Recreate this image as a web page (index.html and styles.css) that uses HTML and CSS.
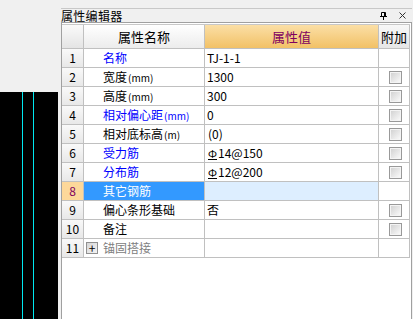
FILE: index.html
```html
<!DOCTYPE html>
<html>
<head>
<meta charset="utf-8">
<link rel="stylesheet" href="styles.css">
</head>
<body>
<div class="left">
  <div class="left-top"></div>
  <div class="canvas"><i class="cy cy1"></i><i class="cy cy2"></i></div>
</div>
<div class="panel">
  <div class="titlebar">
    <span class="title">属性编辑器</span>
    <span class="tools">
      <svg class="pin" width="7" height="8" viewBox="0 0 7 8"><path d="M1.5 0.5H5.5V4.5M1.5 0.5V4.5M4.5 0.5V4.5M0 4.5H7M3.5 4.5V8" stroke="#000" stroke-width="1" fill="none"/></svg>
      <svg class="close" width="7" height="7" viewBox="0 0 7 7"><path d="M0.5 0.5L6.5 6.5M6.5 0.5L0.5 6.5" stroke="#333" stroke-width="1" fill="none"/></svg>
    </span>
  </div>
  <div class="body">
    <div class="grid">
      <div class="c num hd"></div>
      <div class="c hd name-h">属性名称</div>
      <div class="c hd val-h">属性值</div>
      <div class="c hd add-h">附加</div>

      <div class="c num">1</div><div class="c nm blue">名称</div><div class="c val">TJ-1-1</div><div class="c add"></div>
      <div class="c num">2</div><div class="c nm">宽度<span class="u">(mm)</span></div><div class="c val">1300</div><div class="c add"><span class="cb"></span></div>
      <div class="c num">3</div><div class="c nm">高度<span class="u">(mm)</span></div><div class="c val">300</div><div class="c add"><span class="cb"></span></div>
      <div class="c num">4</div><div class="c nm blue">相对偏心距<span class="u">(mm)</span></div><div class="c val">0</div><div class="c add"><span class="cb"></span></div>
      <div class="c num">5</div><div class="c nm">相对底标高<span class="u">(m)</span></div><div class="c val ind">(0)</div><div class="c add"><span class="cb"></span></div>
      <div class="c num">6</div><div class="c nm blue">受力筋</div><div class="c val ind"><span class="bar">Ф</span>14@150</div><div class="c add"><span class="cb"></span></div>
      <div class="c num">7</div><div class="c nm blue">分布筋</div><div class="c val ind"><span class="bar">Ф</span>12@200</div><div class="c add"><span class="cb"></span></div>
      <div class="c num sel">8</div><div class="c nm selname">其它钢筋</div><div class="c val selval"></div><div class="c add"></div>
      <div class="c num">9</div><div class="c nm">偏心条形基础</div><div class="c val">否</div><div class="c add"><span class="cb"></span></div>
      <div class="c num">10</div><div class="c nm">备注</div><div class="c val"></div><div class="c add"><span class="cb"></span></div>
      <div class="c num">11</div><div class="c nm grp"><span class="plus">+</span>锚固搭接</div><div class="c val"></div><div class="c add"></div>
    </div>
  </div>
</div>
</body>
</html>
```

FILE: styles.css
```css
html, body {
  margin: 0;
  padding: 0;
}
body {
  width: 413px;
  height: 319px;
  overflow: hidden;
  background: #f0f0f0;
  display: flex;
  font-family: "Noto Sans CJK SC", "DejaVu Sans", sans-serif;
  font-size: 12px;
  color: #000;
}
.left {
  width: 58px;
  display: flex;
  flex-direction: column;
}
.left-top {
  height: 92px;
  background: #f0f0f0;
}
.canvas {
  flex: 1;
  background: #000;
  display: flex;
}
.cy {
  width: 1px;
  background: #00e8f0;
}
.cy1 { margin-left: 22px; }
.cy2 { margin-left: 10px; }

.panel {
  margin-left: 3px;
  margin-top: 8px;
  width: 351px;
  display: flex;
  flex-direction: column;
}
.titlebar {
  height: 13px;
  border-top: 1px solid #c8c8c8;
  border-bottom: 1px solid #a0a0a0;
  background: #f0f0f0;
  display: flex;
  align-items: center;
  justify-content: space-between;
}
.title {
  font-size: 12px;
  line-height: 13px;
  letter-spacing: 0.3px;
}
.tools {
  display: flex;
  align-items: center;
  gap: 12px;
  padding-right: 6px;
}
.pin { margin-top: 1px; }
.body {
  flex: 1;
  background: #fff;
  border-left: 1px solid #a0a0a0;
  border-right: 1px solid #a0a0a0;
  padding-top: 1px;
}
.grid {
  display: grid;
  grid-template-columns: 22px 121px 174px 31px;
  grid-template-rows: 24px repeat(11, 19px);
  border-top: 1px solid #c8c8c8;
  width: 348px;
}
.c {
  box-sizing: border-box;
  border-right: 1px solid #c0c0c0;
  border-bottom: 1px solid #c0c0c0;
  line-height: 18px;
  white-space: nowrap;
  overflow: hidden;
}
.hd {
  line-height: 23px;
  font-size: 13px;
  text-align: center;
  background: linear-gradient(#fdfdfd, #e6e6e6);
}
.name-h { background: linear-gradient(#ffffff, #ececec); }
.val-h {
  background: linear-gradient(#fbdfa6, #f2c166);
  color: #800060;
}
.add-h { background: linear-gradient(#f8f8f8, #e6e6e6); }
.num {
  text-align: center;
  background: linear-gradient(#f9f9f9, #e8e8e8);
}
.hd.num { background: linear-gradient(#fafafa, #e4e4e4); }
.nm {
  padding-left: 19px;
}
.nm.grp {
  padding-left: 2px;
  color: #808080;
  display: flex;
  align-items: center;
}
.plus {
  box-sizing: border-box;
  width: 12px;
  height: 12px;
  border: 1px solid #909090;
  background: linear-gradient(135deg, #d6d6d6, #f4f4f4);
  color: #000;
  font-size: 12px;
  line-height: 9px;
  text-align: center;
  margin-right: 5px;
}
.blue { color: #0000ff; }
.u { font-size: 10px; margin-left: 1px; }
.val { padding-left: 2px; }
.val.ind { padding-left: 3px; }
.bar {
  display: inline-block;
  font-size: 11px;
  line-height: 11px;
  border-bottom: 1px solid #000;
  margin-right: 1px;
}
.add {
  display: flex;
  justify-content: center;
  align-items: flex-start;
}
.cb {
  box-sizing: border-box;
  width: 13px;
  height: 13px;
  margin-top: 3px;
  margin-left: 2px;
  border: 1px solid #999;
  box-shadow: inset 0 0 0 1px #f4f4f4;
  background: linear-gradient(135deg, #cfcfcf, #fcfcfc);
}
.sel {
  background: #fdd89a;
  color: #800060;
}
.selname {
  background: #3399ff;
  color: #fff;
}
.selval { background: #ddeeff; }
```
